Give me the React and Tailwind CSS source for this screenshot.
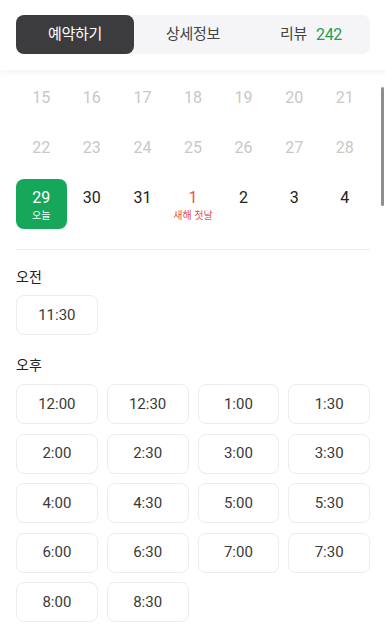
import React from "react";

const font = { fontFamily: 'Roboto, "Noto Sans CJK KR", "Noto Sans", sans-serif' };

const rows = [
  [15, 16, 17, 18, 19, 20, 21],
  [22, 23, 24, 25, 26, 27, 28],
];

const pm = [
  "12:00", "12:30", "1:00", "1:30",
  "2:00", "2:30", "3:00", "3:30",
  "4:00", "4:30", "5:00", "5:30",
  "6:00", "6:30", "7:00", "7:30",
  "8:00", "8:30",
];

function Slot({ t }) {
  return (
    <div className="h-[40px] flex items-center justify-center rounded-[8px] border border-[#ececec] bg-white text-[15px] text-[#3a3a3a]">
      {t}
    </div>
  );
}

export default function App() {
  return (
    <div className="relative w-[386px] h-[633px] overflow-hidden bg-white" style={font}>
      <div className="absolute left-[342px] top-[-36px] w-[38px] h-[38px] rounded-full bg-white shadow-[0_1px_4px_rgba(0,0,0,0.12)]" />
      <div className="relative z-10 bg-white px-4 pt-[15px] pb-[16px] shadow-[0_3px_6px_rgba(0,0,0,0.045)]">
        <div className="flex h-[39px] rounded-[8px] bg-[#f5f5f7] text-[15px] tracking-[-0.3px]">
          <div className="flex-1 flex items-center justify-center rounded-[8px] bg-[#3c3c3f] text-white">예약하기</div>
          <div className="flex-1 flex items-center justify-center text-[#444]">상세정보</div>
          <div className="flex-1 flex items-center justify-center text-[#444] gap-[9px]">
            <span>리뷰</span>
            <span className="text-[#1f9d55] text-[16px]">242</span>
          </div>
        </div>
      </div>

      <div className="px-4 pt-[9px]">
        <div className="grid grid-cols-7">
          {rows.flat().map((d) => (
            <div key={d} className="h-[50px] flex justify-center pt-[9px] text-[16px] leading-[20px] text-[#c8c8c8]">
              {d}
            </div>
          ))}
          <div className="h-[50px] flex flex-col items-center rounded-[8px] bg-[#16a75a] pt-[9px] text-white">
            <span className="text-[16px] leading-[20px]">29</span>
            <span className="text-[10px] leading-[13px] mt-[1px]">오늘</span>
          </div>
          {[30, 31].map((d) => (
            <div key={d} className="h-[50px] flex justify-center pt-[9px] text-[16px] leading-[20px] text-[#222]">{d}</div>
          ))}
          <div className="h-[50px] flex flex-col items-center pt-[9px] text-[#e3534f]">
            <span className="text-[16px] leading-[20px]">1</span>
            <span className="text-[10px] leading-[13px] mt-[1px]">새해 첫날</span>
          </div>
          {[2, 3, 4].map((d) => (
            <div key={d} className="h-[50px] flex justify-center pt-[9px] text-[16px] leading-[20px] text-[#222]">{d}</div>
          ))}
        </div>

        <div className="mt-[20px] h-px bg-[#eeeeee]" />

        <div className="mt-[18px] text-[14px] leading-[18px] text-[#222]">오전</div>
        <div className="mt-[9px] grid grid-cols-4 gap-x-[9px]">
          <Slot t="11:30" />
        </div>

        <div className="mt-[21px] text-[14px] leading-[18px] text-[#222]">오후</div>
        <div className="mt-[10px] grid grid-cols-4 gap-x-[9px] gap-y-[9.5px]">
          {pm.map((t) => (
            <Slot key={t} t={t} />
          ))}
        </div>
      </div>

      <div className="absolute left-[381px] top-[87px] w-[3px] h-[119px] rounded-full bg-[#8e8e8e]" />
    </div>
  );
}
